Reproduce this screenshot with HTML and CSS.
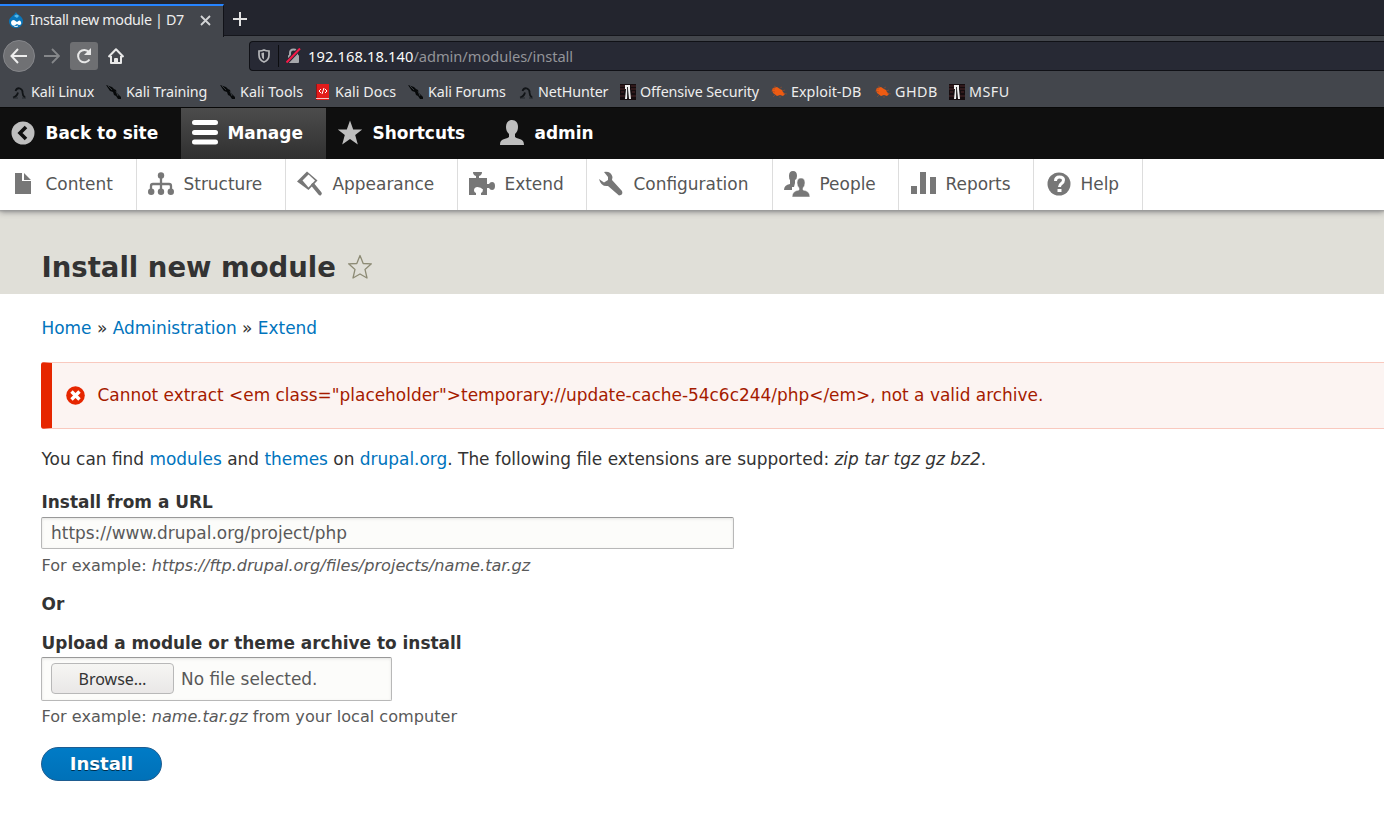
FILE: index.html
```
<!DOCTYPE html>
<html lang="en">
<head>
<meta charset="utf-8">
<title>Install new module | D7</title>
<link rel="stylesheet" href="styles.css">
</head>
<body>
<svg class="defs" width="0" height="0">
  <defs>
    <symbol id="dragon" viewBox="0 0 16 16"><path d="M2 13.500q4-1 5-5M4.500 7Q6 3.500 9 4.500q3 1.500 2.500 4 0 3 2.500 5" fill="none" stroke="#111417" stroke-width="1.800"/><path d="M2 14h5M11 14h4" stroke="#25292d"/></symbol>
    <symbol id="blade" viewBox="0 0 16 16"><path d="M0 1l3 1 3 1 2 2 2 1 1 3 4 4v2h-3l-2-3-2-1-1-3-3-1-2-3z" fill="#07090a"/><path d="M2 2l4 4M10 7l2 5" stroke="#34383c"/></symbol>
    <symbol id="offsec" viewBox="0 0 16 16"><path d="M0 0h16v16H0z" fill="#150c0e"/><path d="M0 2h5M0 5h5M1 8h3M0 12h5M11 2h5M11 5h5M12 8h3M11 12h5" stroke="#4d2629"/><path d="M5 1h5v4l1 10H9L8 5 7 15H5l1-10H5z" fill="#eee"/><path d="M7.500 3v11" stroke="#333"/></symbol>
    <symbol id="bug" viewBox="0 0 16 16"><path d="M2 4l4-1 3 2 2 1 1 2 2 2-2 2-3-1-3 1-4-3-1-3z" fill="#ee5b12"/><path d="M0 7l4 1M5 3L3 2M9 4l2-1M11 7l3-1M12 9l4 1M4 11l-2 2M9 12v2M1 5h3" stroke="#9b4d2b" stroke-width=".6"/></symbol>
  </defs>
</svg>

<header class="browser">
  <div class="tabs">
    <div class="tab">
      <svg class="favicon" width="14" height="16" viewBox="0 0 14 16"><path d="M7 0c1 3 7 4 7 9 0 4-3 7-7 7S0 13 0 9c0-4 5-5 7-9z" fill="#0a75b9"/><path d="M5 4q3-3 5 0L8 6z" fill="#57b9e9"/><path d="M2 11q0-3 3-3l3 2q3-3 4 0 1 3-2 3l-2-1q-5 4-6-1z" fill="#fff"/><path d="M5 14q2 1 4 0" stroke="#fff" fill="none"/></svg>
      <span class="tab-title">Install new module | D7</span>
      <svg class="close" width="11" height="11" viewBox="0 0 11 11"><path d="M1 1l9 9M10 1l-9 9" stroke="#d4d5d7" stroke-width="1.8"/></svg>
    </div>
    <svg class="plus" width="14" height="14" viewBox="0 0 14 14"><path d="M7 0v14M0 7h14" stroke="#e2e2e2" stroke-width="2"/></svg>
  </div>
  <div class="navbar">
    <span class="back"><svg width="18" height="16" viewBox="0 0 18 16"><path d="M17 8H2M8 1L1.500 8 8 15" fill="none" stroke="#eee" stroke-width="2"/></svg></span>
    <svg class="forward" width="16" height="16" viewBox="0 0 16 16"><path d="M0 8h14M8 1l7 7-7 7" fill="none" stroke="#85878a" stroke-width="1.800"/></svg>
    <span class="reload"><svg width="16" height="16" viewBox="0 0 16 16"><path d="M13.500 11.500A6.200 6.200 0 1 1 13 4" fill="none" stroke="#e8e8e8" stroke-width="2"/><path d="M15 0v7H8z" fill="#e8e8e8"/></svg></span>
    <svg class="home" width="16" height="16" viewBox="0 0 16 16"><path d="M.500 9L8 1.200 15.500 9M3 8v7h10V8M7 15v-4h2v4" fill="none" stroke="#e8e8e8" stroke-width="2" stroke-linejoin="round"/></svg>
    <div class="address">
      <svg width="12" height="14" viewBox="0 0 12 14"><path d="M1 2q3 0 5-1 2 1 5 1v4q0 5-5 7-5-2-5-7z" fill="none" stroke="#b5b6b9" stroke-width="1.700"/><path d="M6 3.500v7Q3.500 9 3.500 6V4z" fill="#b5b6b9"/></svg>
      <span class="rule"></span>
      <svg class="lock" width="15" height="16" viewBox="0 0 15 16"><path d="M4 7V5q0-3.500 3.500-3.500T11 5v2" fill="none" stroke="#a7a8ac" stroke-width="2"/><rect x="2" y="7" width="11" height="8" rx="1" fill="#a7a8ac"/><path d="M.500 14.500L14 .500" stroke="#272934" stroke-width="4"/><path d="M.500 14.500L14 .500" stroke="#f51947" stroke-width="2"/></svg>
      <span class="url"><b>192.168.18.140</b>/admin/modules/install</span>
    </div>
  </div>
  <nav class="bookmarks">
    <a><svg><use href="#dragon"/></svg>Kali Linux</a>
    <a><svg><use href="#blade"/></svg>Kali Training</a>
    <a class="wide"><svg><use href="#blade"/></svg>Kali Tools</a>
    <a class="wide"><svg viewBox="0 0 16 16"><path d="M1 0h13v16H1z" fill="#e31b1b"/><path d="M1 0h1v16H1z" fill="#8d1717"/><path d="M1 14h13v1H1z" fill="#f2c4c4"/><path d="M6 5L4 7l2 2M10 5l2 2-2 2M9 4L7 10" stroke="#fff" fill="none"/></svg>Kali Docs</a>
    <a><svg><use href="#blade"/></svg>Kali Forums</a>
    <a><svg><use href="#dragon"/></svg>NetHunter</a>
    <a><svg><use href="#offsec"/></svg>Offensive Security</a>
    <a class="wide"><svg><use href="#bug"/></svg>Exploit-DB</a>
    <a class="wider"><svg><use href="#bug"/></svg>GHDB</a>
    <a class="wider"><svg><use href="#offsec"/></svg>MSFU</a>
  </nav>
</header>

<nav class="toolbar">
  <a><svg viewBox="0 0 26 26"><circle cx="13" cy="13" r="11.500" fill="#bebebe"/><path d="M16 7l-6 6 6 6" fill="none" stroke="#0f0f0f" stroke-width="3.600"/></svg><span>Back to site</span></a>
  <a class="active"><svg viewBox="0 0 26 26"><path d="M2.500 2.500h21M2.500 12.500h21M2.500 22h21" stroke="#fff" stroke-width="5" stroke-linecap="round"/></svg><span>Manage</span></a>
  <a><svg viewBox="0 0 26 26"><path d="M13 .500l3.200 9h9l-7 5.600 2.600 9.400-7.800-5.500-7.800 5.500 2.600-9.400-7-5.600h9z" fill="#bebebe"/></svg><span>Shortcuts</span></a>
  <a><svg viewBox="0 0 26 26"><path d="M13 0c4 0 6 3 6 7 0 3-1 5-3 7v3c4 3 9 1 9 8H1c0-7 5-5 9-8v-3c-2-2-3-4-3-7 0-4 2-7 6-7z" fill="#bebebe"/></svg><span>admin</span></a>
</nav>
<nav class="tray">
  <a><svg viewBox="0 0 26 26"><path d="M4 2h7v8h9v13H4zM13 2l7 7h-7z"/></svg><span>Content</span></a>
  <a><svg viewBox="0 0 26 26"><path d="M13 5v15M3 20v-5q0-2 2-2h16q2 0 2 2v5" fill="none" stroke="#777" stroke-width="2.300"/><circle cx="13" cy="4.500" r="3.200"/><circle cx="3.200" cy="20.800" r="3.200"/><circle cx="13" cy="20.800" r="3.200"/><circle cx="22.800" cy="20.800" r="3.200"/></svg><span>Structure</span></a>
  <a><svg viewBox="0 0 26 26"><path d="M0 10.500L10 .500l10.500 9-9 9.500z"/><path d="M5.500 9.500l6-6 6.500 6-6.500 7z" fill="#fff"/><path d="M16 14l7 8.500" fill="none" stroke="#777" stroke-width="3.600" stroke-linecap="round"/></svg><span>Appearance</span></a>
  <a><svg viewBox="0 0 26 26"><path d="M0 7h7V5Q4 4 4 1h9q0 3-3 4v2h8v6h2q1-2 3-2 3 0 3 4t-3 4q-2 0-3-2h-2v7h-6v-2q2-1 2-3.500Q12 16 8.500 16T5 19.500Q5 21 7 22v2H0z"/></svg><span>Extend</span></a>
  <a><svg viewBox="0 0 26 26"><path d="M6 1q7-1 8.500 5l-.5 3 10 11q1.500 4-3 4.500L10 15Q3 16 1 8l5 3.500L10 9V6z"/></svg><span>Configuration</span></a>
  <a><svg viewBox="0 0 26 26"><path d="M9 0q4 0 4 5 0 3-2 4v3l-1 4H8v3H0q0-5 6-6V9Q5 8 5 5q0-5 4-5z"/><path d="M17 7q4 0 4 5 0 3-2 5v2q7 1 7 7H8q0-6 7-7v-2q-2-2-2-5 0-5 4-5z" stroke="#fff" stroke-width=".5"/></svg><span>People</span></a>
  <a><svg viewBox="0 0 26 26"><path d="M1 15h6v8H1zM10 1h6v22h-6zM20 6h6v17h-6z"/></svg><span>Reports</span></a>
  <a><svg viewBox="0 0 26 26"><circle cx="14" cy="13" r="11.500"/><path d="M10.500 10q0-4 4-4t4 3c0 4-4 3-4 7" fill="none" stroke="#fff" stroke-width="3"/><path d="M12.500 18h4v3h-4z" fill="#fff"/></svg><span>Help</span></a>
</nav>

<section class="heading">
  <h1>Install new module</h1>
  <svg class="star" width="26" height="26" viewBox="0 0 26 26"><path d="M13 1.500l3.200 8 8.200.300-6.400 5.600 2 8.600-7-4-7 4 2-8.600-6.400-5.600 8.200-.300z" fill="none" stroke="#8d8b75" stroke-width="1.300" stroke-linejoin="round"/></svg>
</section>

<main>
  <div class="crumbs"><a>Home</a> » <a>Administration</a> » <a>Extend</a></div>
  <div class="error">
    <svg width="19" height="19" viewBox="0 0 19 19"><circle cx="9.500" cy="9.500" r="9.300" fill="#e62600"/><path d="M5.500 5.500l8 8M13.500 5.500l-8 8" stroke="#fff" stroke-width="3.400"/></svg>
    <span>Cannot extract &lt;em class="placeholder"&gt;temporary://update-cache-54c6c244/php&lt;/em&gt;, not a valid archive.</span>
  </div>
  <p class="intro">You can find <a>modules</a> and <a>themes</a> on <a>drupal.org</a>. The following file extensions are supported: <em>zip tar tgz gz bz2</em>.</p>
  <label>Install from a URL</label>
  <div class="field">https://www.drupal.org/project/php</div>
  <p class="description">For example: <em>https://ftp.drupal.org/files/projects/name.tar.gz</em></p>
  <p class="or">Or</p>
  <label>Upload a module or theme archive to install</label>
  <div class="field file"><button class="browse">Browse…</button><span>No file selected.</span></div>
  <p class="description last">For example: <em>name.tar.gz</em> from your local computer</p>
  <button class="install">Install</button>
</main>
</body>
</html>
```

FILE: styles.css
```
* { box-sizing: border-box; }
body { margin: 0; width: 1384px; height: 817px; overflow: hidden; background: #fff; color: #333; font: 16.96px/24px "DejaVu Sans", sans-serif; }
.defs { position: absolute; }
svg { display: block; flex: none; }
p, h1 { margin: 0; }
a { color: #0074bd; }
.browser { height: 107px; background: #43464c; color: #eee; font: 14.67px/20px "Noto Sans", sans-serif; }
.tabs { display: flex; height: 36px; background: #23252e; border-bottom: 1px solid #15161c; }
.tab { display: flex; align-items: center; width: 224px; height: 33px; margin-top: 4px; padding: 0 12px 3px 9px; background: #43464c; border-top: 2px solid #2684ff; border-right: 1px solid #111218; }
.tab-title { margin-left: 7px; white-space: nowrap; font-size: 14.3px; letter-spacing: -.34px; }
.close { margin-left: auto; }
.plus { margin: 12px 0 0 9px; }
.navbar { display: flex; align-items: center; height: 40px; padding-left: 3px; }
.back { display: grid; place-items: center; width: 32px; height: 32px; border-radius: 50%; background: #707174; border: 1px solid #85868a; }
.forward { margin-left: 9px; }
.reload { display: grid; place-items: center; width: 28px; height: 28px; margin-left: 10px; border-radius: 3px; background: #6e6f72; }
.home { margin-left: 10px; }
.address { display: flex; align-items: center; flex: 1; height: 30px; margin-left: 125px; padding-left: 8px; background: #272934; border: 1px solid #101116; border-right: 0; border-radius: 4px 0 0 4px; }
.rule { width: 1px; height: 22px; margin: 0 7px 0 8px; background: #0c0d10; }
.url { margin-left: 7px; color: #939499; white-space: nowrap; letter-spacing: -.05px; }
.url b { font-weight: 400; color: #fafafa; letter-spacing: .1px; }
.bookmarks { display: grid; grid-template-columns: 95px 114px 95px 93px 110px 102px 151px 104px 74px 90px; height: 31px; padding-left: 11px; align-items: center; font-size: 14.3px; letter-spacing: -.12px; }
.bookmarks a { display: flex; align-items: center; color: #eee; white-space: nowrap; gap: 4px; }
.bookmarks .wide { letter-spacing: .05px; }
.bookmarks .wider { letter-spacing: .5px; }
.bookmarks svg { width: 16px; height: 16px; }
.toolbar { position: relative; z-index: 2; display: grid; grid-template-columns: 181px 145px 162px 130px; height: 52px; background: #0f0f0f; border-top: 1px solid #080808; font-weight: 700; }
.toolbar a, .tray a { display: flex; align-items: center; padding: 0 0 2px 10px; white-space: nowrap; color: #fff; }
.toolbar a + a { padding-left: 11px; }
.toolbar svg, .tray svg { width: 26px; height: 26px; }
.toolbar span { margin-left: 9.5px; }
.toolbar .active { background: linear-gradient(#4c4c4c, #303030); }
.tray { position: relative; display: grid; grid-template-columns: 137px 149px 172px 129px 186px 126px 135px 109px; height: 51px; background: #fff; box-shadow: 0 0 2px 1px #999, 0 2px 6px #888; }
.tray a { height: 51px; color: #565656; border-right: 1px solid #ddd; padding-left: 11px; }
.tray span { margin-left: 9.5px; }
.tray a:first-child span { margin-left: 8.5px; }
.tray svg { fill: #777; }
.heading { display: flex; height: 84px; padding: 39px 0 0 41.5px; background: #e0dfd8; }
h1 { width: 305.5px; font-size: 27.5px; line-height: 36px; white-space: nowrap; }
.star { margin-top: 5px; }
main { padding: 22px 0 0 41px; }
.crumbs { height: 46px; padding-left: .5px; white-space: nowrap; }
.error { display: flex; align-items: center; height: 67px; padding-left: 14px; border: 1px solid #f9c9bf; border-left: 11px solid #e62600; border-right: 0; border-radius: 3px 0 0 3px; background: #fcf4f2; color: #a51b00; white-space: nowrap; }
.error span { margin: -2px 0 0 12.5px; }
.intro { margin-top: 18px; padding-left: .5px; white-space: nowrap; }
label { display: block; margin-top: 19px; height: 27px; padding-left: .5px; font-weight: 700; white-space: nowrap; }
.field { width: 693px; height: 32px; padding: 0 9px; border: 1px solid #b8b8b8; border-top-color: #999; border-radius: 2px; background: #fcfcfa; box-shadow: inset 0 1px 3px #0000001a; color: #595959; line-height: 30px; }
.description { height: 24px; margin-top: 5px; padding-left: .5px; font-size: 16.13px; color: #595959; white-space: nowrap; }
.or { margin-top: 14px; padding-left: .5px; font-weight: 700; }
.or + label { margin-top: 15px; height: 26px; }
.file { display: flex; align-items: center; width: 351px; height: 44px; padding-bottom: 1px; }
.file span { margin-left: 7px; }
.description.last { margin-top: 4px; }
.browse { width: 123px; height: 31px; padding: 0; border: 1px solid #b8b8b8; border-radius: 4px; background: linear-gradient(#f6f6f3, #e9e7e7); color: #333; font: 16px "Noto Sans", sans-serif; }
.install { width: 121px; height: 34px; margin-top: 18px; padding: 0 0 1px; border: 1px solid #1e5c90; border-radius: 17px; background: linear-gradient(#007bc6, #0071b8); color: #fff; font: 700 18px "DejaVu Sans", sans-serif; text-shadow: 0 1px #0009; }
```
